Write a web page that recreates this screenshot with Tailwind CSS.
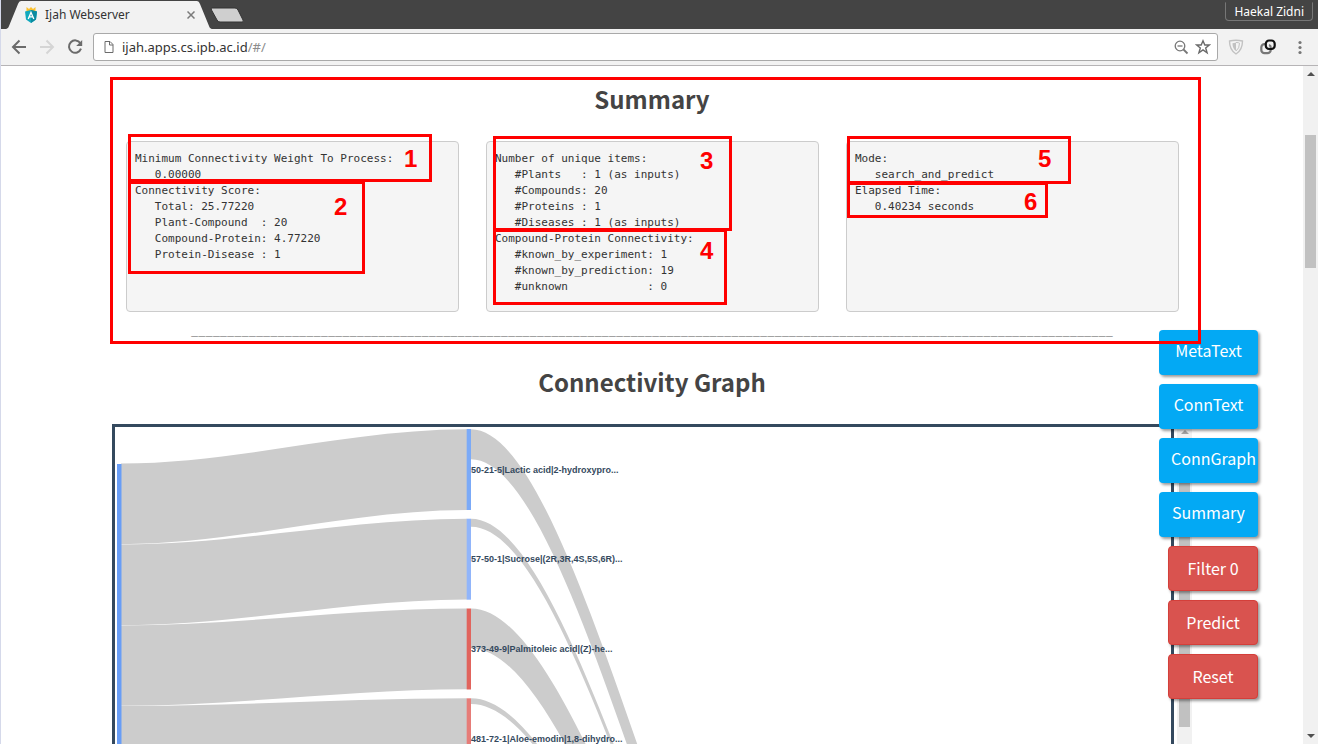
<!DOCTYPE html>
<html lang="en">
<head>
<meta charset="utf-8">
<title>Ijah Webserver</title>
<script src="https://cdn.jsdelivr.net/npm/@tailwindcss/browser@4"></script>
</head>
<body class="bg-white">
<div class="flex h-screen flex-col overflow-hidden border-l border-[#d5d9ea] font-['Noto_Sans',sans-serif] text-[#333]">

  <!-- Tab strip -->
  <header class="flex h-[29px] shrink-0 items-end justify-between bg-[#444] pl-1">
    <div class="flex items-end" role="tablist">
      <svg class="h-7 w-4" viewBox="0 0 16 28" aria-hidden="true"><path d="M0 28C3 28 3.500 26 4 25L13 3Q14 0 16 0V28Z" fill="#f2f2f2"/></svg>
      <div role="tab" aria-selected="true" class="flex h-7 w-[176px] items-center bg-[#f2f2f2] pl-1">
        <svg class="mr-2 h-4 w-3 shrink-0" viewBox="0 0 12 16" aria-hidden="true">
          <path d="M1.500 0L4 2L6 0L8 2L10.500 0V5H1.500Z" fill="#fbc02d"/>
          <path d="M0 4.500L6 3L12 4.500L11 12.500L6 16L1 12.500Z" fill="#11a9bd"/>
          <path d="M6 3L12 4.500L11 12.500L6 16Z" fill="#0b8ba0"/>
          <path d="M3.200 12L6 5.500L8.800 12M4.300 9.800H7.700" fill="none" stroke="#fff" stroke-width="1.300"/>
        </svg>
        <span class="grow text-[12px] leading-4">Ijah Webserver</span>
        <button type="button" aria-label="Close tab" class="-mr-0.5 flex size-4 items-center justify-center">
          <svg class="size-2" viewBox="0 0 8 8"><path d="M.5 .5L7.500 7.500M7.500 .5L.5 7.500" stroke="#7b7b7b" stroke-width="1.500"/></svg>
        </button>
      </div>
      <svg class="h-7 w-4" viewBox="0 0 16 28" aria-hidden="true"><path d="M0 0Q2 0 3 3L12 25C12.500 26 13 28 16 28H0Z" fill="#f2f2f2"/></svg>
      <button type="button" aria-label="New tab" class="-ml-1 mb-1.5">
        <svg class="h-4 w-9" viewBox="0 0 36 16"><path d="M3 1H26Q28 1 29 3L34 13Q35 15 33 15H11Q9 15 8 13L2.500 3Q1.500 1 3 1Z" fill="#cfcfcf" stroke="#333" stroke-width="1"/></svg>
      </button>
    </div>
    <button type="button" class="mr-[5px] mb-2 h-[19px] rounded-b-[4px] border border-[#777] border-t-[#444] px-2 text-[12px] leading-4 text-white">Haekal Zidni</button>
  </header>

  <!-- Toolbar -->
  <nav class="flex h-[37px] shrink-0 items-center border-b border-[#b6b4b6] bg-[#f2f2f2] pl-2.5" aria-label="Browser toolbar">
    <button type="button" aria-label="Back" class="mr-3"><svg class="size-4" viewBox="0 0 16 16" fill="none" stroke="#6b6b6b" stroke-width="2"><path d="M15 8H2.500M8.500 1.500L2 8L8.500 14.500"/></svg></button>
    <button type="button" aria-label="Forward" class="mr-3"><svg class="size-4" viewBox="0 0 16 16" fill="none" stroke="#d5d5d5" stroke-width="2"><path d="M1 8H13.500M7.500 1.500L14 8L7.500 14.500"/></svg></button>
    <button type="button" aria-label="Reload" class="mr-2.5"><svg class="size-4" viewBox="0 0 16 16"><path d="M13.400 4.200A6.200 6.200 0 1 0 14 9.700" fill="none" stroke="#6b6b6b" stroke-width="2"/><path d="M15.200 1V7H9.200Z" fill="#6b6b6b"/></svg></button>
    <div class="flex h-7 grow items-center rounded-[3px] border border-[#a9a9a9] bg-white px-2.5">
      <svg class="mr-2 h-3 w-2.5 shrink-0" viewBox="0 0 10 12" fill="none" stroke="#6b6b6b"><path d="M1 .5H6L9 3.500V11.500H1ZM5.500 .5V4H9"/></svg>
      <div class="flex grow text-[13px] leading-5"><span>ijah.apps.cs.ipb.ac.id</span><span class="text-[#8c8c8c]">/#/</span></div>
      <button type="button" aria-label="Zoom" class="mx-1.5"><svg class="size-4" viewBox="0 0 16 16" fill="none" stroke="#777" stroke-width="1.300"><circle cx="7" cy="7" r="4.800"/><path d="M4.500 7H9.500"/><path d="M10.500 10.500L14.500 14.500" stroke-width="1.800"/></svg></button>
      <button type="button" aria-label="Bookmark this page" class="-mr-1"><svg class="size-4" viewBox="0 0 16 16" fill="none" stroke="#6b6b6b" stroke-width="1.400"><path d="M8 1.800L9.800 6H14.300L10.700 8.900L12.100 13.800L8 10.900L3.900 13.800L5.300 8.900L1.700 6H6.200Z"/></svg></button>
    </div>
    <button type="button" aria-label="Shield extension" class="ml-2.5"><svg class="size-4" viewBox="0 0 16 16"><path d="M1.500 2Q8 .5 14.500 2Q14.500 11 8 15Q1.500 11 1.500 2Z" fill="#f4f4f4" stroke="#c2c2c2" stroke-width="1.400"/><path d="M4.500 4.200Q8 3.400 8 3.400V12Q4.500 9.500 4.500 4.200Z" fill="#c2c2c2"/><path d="M8 3.400Q11.500 3.700 11.500 4.200Q11.500 9.500 8 12" fill="none" stroke="#c2c2c2"/></svg></button>
    <button type="button" aria-label="Link extension" class="ml-4"><svg class="size-4" viewBox="0 0 16 16" fill="none" stroke-width="2.200"><path d="M5 5.200H4.500A3.200 3.200 0 0 0 1.300 8.400V11A3.200 3.200 0 0 0 4.500 14.200H7.500A3.200 3.200 0 0 0 10.700 11V8.500Q10.700 6.500 9 6" stroke="#777"/><path d="M10 10H11.500A3.200 3.200 0 0 0 14.700 6.800V4.700A3.200 3.200 0 0 0 11.500 1.500H9A3.200 3.200 0 0 0 5.800 4.700V6.800A3.200 3.200 0 0 0 9 10Z" stroke="#111"/></svg></button>
    <button type="button" aria-label="Menu" class="mr-3.5 ml-5"><svg class="h-4 w-2" viewBox="0 0 8 16" fill="#777"><circle cx="4" cy="3.500" r="1.600"/><circle cx="4" cy="8.500" r="1.600"/><circle cx="4" cy="13.500" r="1.600"/></svg></button>
  </nav>

  <div class="flex min-h-0 grow">
    <main class="min-w-0 grow overflow-hidden">
      <div class="relative mx-auto w-full max-w-[1080px]">
        <h2 class="pt-[15px] text-center font-['Noto_Sans_CJK_SC',sans-serif] text-[24px] leading-9 font-semibold text-[#444]">Summary</h2>

        <section class="mt-6 grid grid-cols-3 gap-[27px] pr-[13px] pl-3.5" aria-label="Summary details">
<pre class="h-[171px] overflow-hidden rounded-[4px] border border-[#ccc] bg-[#f5f5f5] px-2 py-[9px] font-['DejaVu_Sans_Mono',monospace] text-[11px] leading-4">Minimum Connectivity Weight To Process:
   0.00000
Connectivity Score:
   Total: 25.77220
   Plant-Compound  : 20
   Compound-Protein: 4.77220
   Protein-Disease : 1</pre>
<pre class="h-[171px] overflow-hidden rounded-[4px] border border-[#ccc] bg-[#f5f5f5] px-2 py-[9px] font-['DejaVu_Sans_Mono',monospace] text-[11px] leading-4">Number of unique items:
   #Plants   : 1 (as inputs)
   #Compounds: 20
   #Proteins : 1
   #Diseases : 1 (as inputs)
Compound-Protein Connectivity:
   #known_by_experiment: 1
   #known_by_prediction: 19
   #unknown            : 0</pre>
<pre class="h-[171px] overflow-hidden rounded-[4px] border border-[#ccc] bg-[#f5f5f5] px-2 py-[9px] font-['DejaVu_Sans_Mono',monospace] text-[11px] leading-4">Mode:
   search_and_predict
Elapsed Time:
   0.40234 seconds</pre>
        </section>

        <p class="mt-2 overflow-hidden text-center font-['Noto_Sans_CJK_SC',sans-serif] text-[13px] leading-5 font-light whitespace-nowrap text-[#777]">________________________________________________________________________________________________________________________________</p>

        <h2 class="mt-6 text-center font-['Noto_Sans_CJK_SC',sans-serif] text-[24px] leading-9 font-semibold text-[#444]">Connectivity Graph</h2>

        <section class="mt-6 flex gap-[3px]" aria-label="Connectivity graph">
          <div class="min-w-0 grow overflow-hidden border-[3px] border-[#34495e]">
            <svg class="h-[420px] w-full" viewBox="115 427 1056 420" preserveAspectRatio="xMinYMin slice" role="img" aria-label="Plant to compound to protein flow">
              <g fill="#ccc">
                <path d="M121 463.500C236 463.500 351 429.300 467 429.300V510C351 510 236 544.200 121 544.200Z"/>
                <path d="M121 544.500C236 544.500 351 518.700 467 518.700V599.500C351 599.500 236 625.300 121 625.300Z"/>
                <path d="M121 625.500C236 625.500 351 608.500 467 608.500V689.300C351 689.300 236 705.800 121 705.800Z"/>
                <path d="M121 706C236 706 351 698.300 467 698.300V779C351 779 236 786.700 121 786.700Z"/>
                <path d="M471 429.300C586 429.300 702 1098 817 1098V1128C702 1128 586 459.300 471 459.300Z"/>
                <path d="M471 518.700C586 518.700 702 1128 817 1128V1136C702 1136 586 526.700 471 526.700Z"/>
                <path d="M471 608.500C586 608.500 702 1136 817 1136V1176C702 1176 586 648.500 471 648.500Z"/>
                <path d="M471 698.300C586 698.300 702 1176 817 1176V1182C702 1182 586 704 471 704Z"/>
              </g>
              <rect x="117" y="464" width="4.500" height="400" fill="#689df6"/>
              <rect x="466.700" y="429" width="4.300" height="81" fill="#7baaf7"/>
              <rect x="466.700" y="518.700" width="4.300" height="81" fill="#91b5fa"/>
              <rect x="466.700" y="608.500" width="4.300" height="81" fill="#e1645d"/>
              <rect x="466.700" y="698.300" width="4.300" height="81" fill="#e67c78"/>
              <g class="font-['Liberation_Sans',sans-serif] text-[9px] font-bold" fill="#34495e">
                <text x="471" y="473">50-21-5|Lactic acid|2-hydroxypro...</text>
                <text x="471" y="562">57-50-1|Sucrose|(2R,3R,4S,5S,6R)...</text>
                <text x="471" y="652">373-49-9|Palmitoleic acid|(Z)-he...</text>
                <text x="471" y="742">481-72-1|Aloe-emodin|1,8-dihydro...</text>
              </g>
            </svg>
          </div>
          <div class="flex w-[15px] shrink-0 flex-col items-center bg-[#f1f1f1] pt-1.5" aria-hidden="true">
            <svg class="h-1 w-2" viewBox="0 0 8 4"><path d="M0 4L4 0L8 4Z" fill="#a3a3a3"/></svg>
            <div class="mt-2 h-[285px] w-[11px] bg-[#c1c1c1]"></div>
          </div>
        </section>

        <!-- Numbered callouts over the summary -->
        <div class="pointer-events-none absolute inset-0 z-20 font-['Liberation_Sans',sans-serif] text-[24px] leading-6 font-bold text-[#f00]">
          <div class="absolute top-[11px] -left-0.5 h-[267px] w-[1091px] border-[3px] border-[#f00]"></div>
          <div class="absolute top-[68px] left-4 h-12 w-[304px] border-[3px] border-[#f00]"></div>
          <div class="absolute top-[115px] left-4 h-[93px] w-[237px] border-[3px] border-[#f00]"></div>
          <div class="absolute top-[70px] left-[381px] h-[95px] w-[239px] border-[3px] border-[#f00]"></div>
          <div class="absolute top-[163px] left-[381px] h-[76px] w-[234px] border-[3px] border-[#f00]"></div>
          <div class="absolute top-[70px] left-[735px] h-12 w-[224px] border-[3px] border-[#f00]"></div>
          <div class="absolute top-[116px] left-[735px] h-9 w-[201px] border-[3px] border-[#f00]"></div>
          <span class="absolute top-[81px] left-[292px]">1</span>
          <span class="absolute top-[129px] left-[222px]">2</span>
          <span class="absolute top-[83px] left-[588px]">3</span>
          <span class="absolute top-[173px] left-[588px]">4</span>
          <span class="absolute top-[81px] left-[926px]">5</span>
          <span class="absolute top-[124px] left-[912px]">6</span>
        </div>

        <!-- Floating actions -->
        <div class="absolute top-[264px] -right-[66px] z-10 flex flex-col items-end gap-[9px] font-['Noto_Sans_CJK_SC',sans-serif] text-[16px] leading-6 text-white [text-shadow:0_0_2px_rgba(255,255,255,0.5)]">
          <button type="button" class="h-[45px] w-[99px] rounded-[4px] bg-[#03a9f4] px-3 pb-1.5 shadow-[2px_2px_3px_rgba(0,0,0,0.4)]">MetaText</button>
          <button type="button" class="h-[45px] w-[99px] rounded-[4px] bg-[#03a9f4] px-3 pb-1.5 shadow-[2px_2px_3px_rgba(0,0,0,0.4)]">ConnText</button>
          <button type="button" class="h-[45px] w-[99px] rounded-[4px] bg-[#03a9f4] px-3 pb-1.5 shadow-[2px_2px_3px_rgba(0,0,0,0.4)]">ConnGraph</button>
          <button type="button" class="h-[45px] w-[99px] rounded-[4px] bg-[#03a9f4] px-3 pb-1.5 shadow-[2px_2px_3px_rgba(0,0,0,0.4)]">Summary</button>
          <button type="button" class="h-[45px] w-[90px] rounded-[4px] border border-[#d43f3a] bg-[#d9534f] px-3 pb-0.5 shadow-[2px_2px_3px_rgba(0,0,0,0.4)]">Filter 0</button>
          <button type="button" class="h-[45px] w-[90px] rounded-[4px] border border-[#d43f3a] bg-[#d9534f] px-3 pb-0.5 shadow-[2px_2px_3px_rgba(0,0,0,0.4)]">Predict</button>
          <button type="button" class="h-[45px] w-[90px] rounded-[4px] border border-[#d43f3a] bg-[#d9534f] px-3 pb-0.5 shadow-[2px_2px_3px_rgba(0,0,0,0.4)]">Reset</button>
        </div>
      </div>
    </main>

    <!-- Page scrollbar -->
    <div class="flex w-[15px] shrink-0 flex-col items-center bg-[#f1f1f1] py-1.5" aria-hidden="true">
      <svg class="h-1 w-2" viewBox="0 0 8 4"><path d="M0 4L4 0L8 4Z" fill="#505050"/></svg>
      <div class="mt-[59px] h-[133px] w-[11px] bg-[#c1c1c1]"></div>
      <svg class="mt-auto h-1 w-2" viewBox="0 0 8 4"><path d="M0 0L4 4L8 0Z" fill="#505050"/></svg>
    </div>
  </div>
</div>
</body>
</html>
